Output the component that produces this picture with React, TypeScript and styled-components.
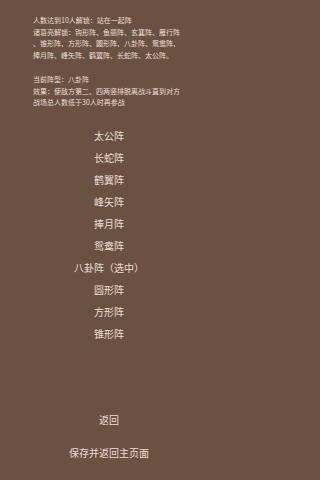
import styled, { createGlobalStyle } from "styled-components";

const GlobalStyle = createGlobalStyle`
    html, body {
        margin: 0;
        padding: 0;
        background: #6a5142;
    }
    body {
        font-family: "Noto Sans CJK SC", "Noto Sans", sans-serif;
    }
`;

const StyledPage = styled.div`
    width: 218px;
    height: 480px;
    background: #6a5142;
    color: #eadfd3;
    display: flex;
    flex-direction: column;
    padding-top: 15px;
    box-sizing: border-box;
`;

const StyledInfo = styled.div<{ top?: number }>`
    width: 152px;
    margin: ${props => props.top || 0}px 0 0 33px;
    font-size: 7px;
    line-height: 11.5px;
    line-break: anywhere;
    word-break: break-all;
`;

const StyledList = styled.div`
    display: flex;
    flex-direction: column;
    align-items: center;
    margin-top: 16px;
`;

const StyledItem = styled.div`
    font-size: 10px;
    line-height: 22px;
    cursor: pointer;
`;

const StyledFooter = styled.div`
    display: flex;
    flex-direction: column;
    align-items: center;
    gap: 11px;
    margin-top: 64px;
`;

const formations = [
    "太公阵",
    "长蛇阵",
    "鹤翼阵",
    "峰矢阵",
    "捧月阵",
    "鸳鸯阵",
    "八卦阵",
    "圆形阵",
    "方形阵",
    "锥形阵",
];

const selected = "八卦阵";

export default function App() {
    return (
        <>
            <GlobalStyle />
            <StyledPage>
                <StyledInfo>
                    人数达到10人解锁：站在一起阵
                    <br />
                    诸葛亮解锁：钩形阵、鱼丽阵、玄襄阵、雁行阵、锥形阵、方形阵、圆形阵、八卦阵、鸳鸯阵、捧月阵、峰矢阵、鹤翼阵、长蛇阵、太公阵。
                </StyledInfo>
                <StyledInfo top={13}>
                    当前阵型：{selected}
                    <br />
                    效果：使敌方第二、四两竖排脱离战斗直到对方战场总人数低于30人时再参战
                </StyledInfo>
                <StyledList>
                    {formations.map(f => (
                        <StyledItem key={f}>
                            {f === selected ? `${f}（选中）` : f}
                        </StyledItem>
                    ))}
                </StyledList>
                <StyledFooter>
                    <StyledItem>返回</StyledItem>
                    <StyledItem>保存并返回主页面</StyledItem>
                </StyledFooter>
            </StyledPage>
        </>
    );
}
